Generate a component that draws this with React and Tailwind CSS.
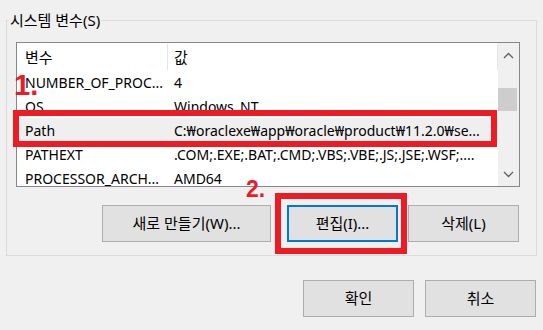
import React from "react";

const rows = [
  { name: "NUMBER_OF_PROC...", value: "4" },
  { name: "OS", value: "Windows_NT" },
  { name: "Path", value: "C:₩oraclexe₩app₩oracle₩product₩11.2.0₩se...", selected: true },
  { name: "PATHEXT", value: ".COM;.EXE;.BAT;.CMD;.VBS;.VBE;.JS;.JSE;.WSF;...." },
  { name: "PROCESSOR_ARCH...", value: "AMD64" },
];

function Chevron({ up }) {
  return (
    <svg width="11" height="7" viewBox="0 0 11 7" fill="none">
      <polyline
        points={up ? "1,6 5.5,1.5 10,6" : "1,1 5.5,5.5 10,1"}
        stroke="#606060"
        strokeWidth="1.3"
      />
    </svg>
  );
}

function Button({ children, width, focused }) {
  return (
    <div
      className={`h-[37px] ${width} flex items-center justify-center bg-[#e1e1e1] text-[15px] text-black ${
        focused ? "border-2 border-[#0078d7]" : "border border-[#adadad]"
      }`}
    >
      {children}
    </div>
  );
}

export default function App() {
  return (
    <div className="relative w-[543px] h-[330px] bg-[#f0f0f0] overflow-hidden font-['Noto_Sans','Noto_Sans_CJK_KR',sans-serif] text-black">
      {/* system variables group */}
      <div className="relative ml-[6px] mt-[20px] w-[531px] h-[236px] border border-[#dcdcdc]">
        <span className="absolute left-[2px] top-[-12px] bg-[#f0f0f0] px-[1px] text-[15px] leading-[22px]">
          시스템 변수(S)
        </span>

        <div className="ml-[9px] mt-[21px] w-[504px] h-[145px] border border-[#828790] bg-white flex">
          <div className="w-[481px] flex flex-col overflow-hidden">
            <div className="h-[27px] flex text-[15px] shrink-0">
              <div className="w-[151px] h-[26px] mt-px pl-[8px] flex items-center border-r border-[#e5e5e5]">변수</div>
              <div className="w-[330px] h-[26px] mt-px pl-[6px] flex items-center border-r border-[#e5e5e5]">값</div>
            </div>
            {rows.map((r) => (
              <div
                key={r.name}
                className={`h-[24px] shrink-0 flex items-center text-[14px] whitespace-nowrap ${
                  r.selected ? "bg-[#efefef]" : ""
                }`}
              >
                <div className="w-[151px] pl-[8px] overflow-hidden">{r.name}</div>
                <div className="pl-[6px]">{r.value}</div>
              </div>
            ))}
          </div>
          <div className="w-[21px] bg-[#f0f0f0] flex flex-col">
            <div className="h-[24px] flex items-center justify-center">
              <Chevron up />
            </div>
            <div className="flex-1">
              <div className="mt-[21px] h-[23px] w-[19px] bg-[#cdcdcd]" />
            </div>
            <div className="h-[24px] flex items-center justify-center">
              <Chevron />
            </div>
          </div>
        </div>

        <div className="flex mt-[18px] pl-[95px]">
          <Button width="w-[169px]">새로 만들기(W)...</Button>
          <div className="ml-[16px]">
            <Button width="w-[111px]" focused>편집(I)...</Button>
          </div>
          <div className="ml-[10px]">
            <Button width="w-[111px]">삭제(L)</Button>
          </div>
        </div>
      </div>

      <div className="flex justify-end gap-[11px] mt-[24px] pr-[7px]">
        <Button width="w-[111px]">확인</Button>
        <Button width="w-[111px]">취소</Button>
      </div>

      {/* annotations */}
      <div className="absolute left-[13px] top-[110px] w-[484px] h-[37px] border-[6px] border-[#ed1c24]" />
      <div className="absolute left-[275px] top-[193px] w-[132px] h-[61px] border-[6px] border-[#ed1c24]" />
      <div className="absolute left-[14px] top-[71px] text-[#ed1c24] font-bold text-[29px] leading-none font-['Liberation_Sans',sans-serif]">
        1.
      </div>
      <div className="absolute left-[246px] top-[178px] text-[#ed1c24] font-bold text-[23px] leading-none font-['Liberation_Sans',sans-serif]">
        2.
      </div>
    </div>
  );
}
